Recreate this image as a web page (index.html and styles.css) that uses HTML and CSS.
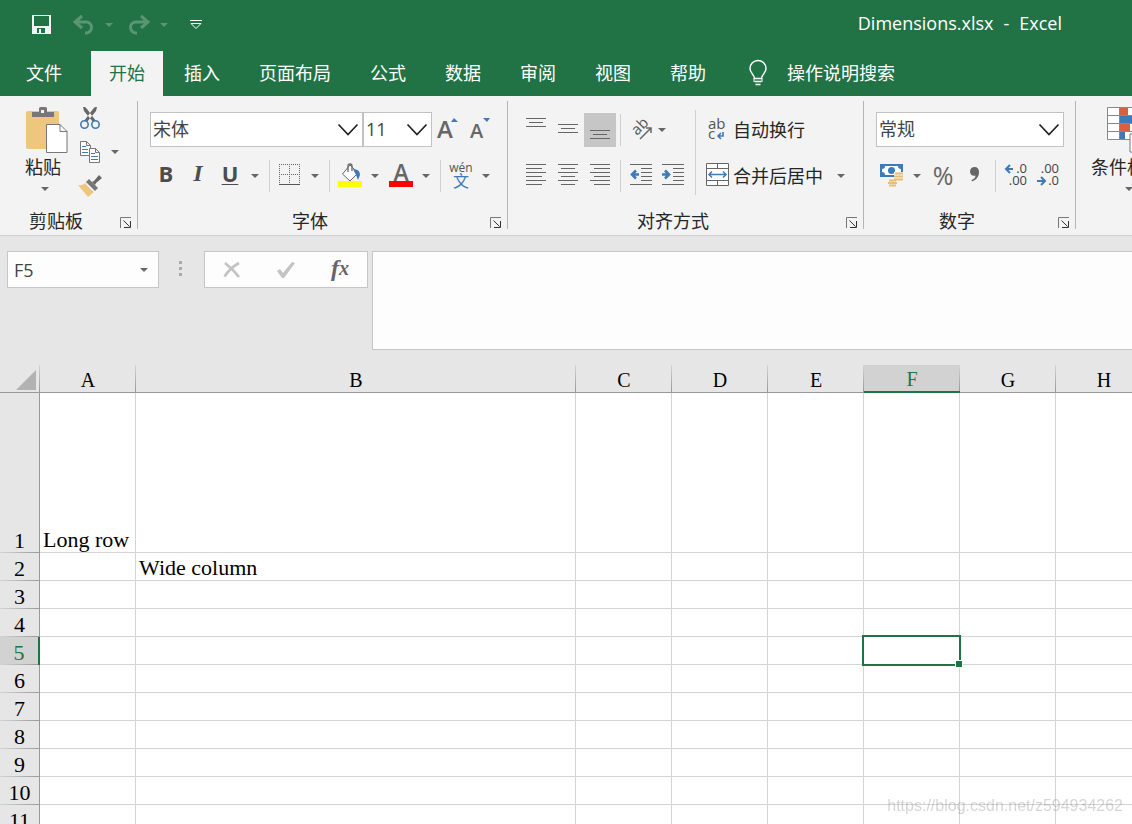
FILE: index.html
```html
<!DOCTYPE html>
<html lang="zh-CN">
<head>
<meta charset="utf-8">
<title>Dimensions.xlsx - Excel</title>
<link rel="stylesheet" href="styles.css">
</head>
<body>
<svg class="defs" aria-hidden="true">
  <symbol id="caret" viewBox="0 0 14 8"><path d="M3 2h8l-4 4z" fill="currentColor"/></symbol>
  <symbol id="chevron" viewBox="0 0 22 14"><path d="M1.500 1.500L11 11.500 20.500 1.500" fill="none" stroke="#222" stroke-width="1.700"/></symbol>
  <symbol id="launch" viewBox="0 0 11 11"><path d="M.5 11V.5H11" fill="none" stroke="#777"/><path d="M3.500 3.500l6 6M10.500 4v6.500H4" fill="none" stroke="#333"/></symbol>
</svg>
<div class="app">
  <header class="titlebar">
    <div class="quick">
      <button class="qbtn" aria-label="保存"><svg width="19" height="19" viewBox="0 0 19 19"><path d="M0 0h19v19H0z" fill="#f3f3f3"/><path d="M2 1h15v10H2z" fill="#217346"/><path d="M5 13h8v5H5z" fill="#217346"/><path d="M7 14h2v4H7z" fill="#f3f3f3"/></svg></button>
      <button class="qbtn undo" aria-label="撤消"><svg width="22" height="20" viewBox="0 0 22 20"><path d="M9 1L2 7l7 6M2 7h11a5.500 5.500 0 0 1 0 11h-1" fill="none" stroke="currentColor" stroke-width="3"/></svg></button>
      <button class="drop faded" aria-label="撤消列表"><svg width="14" height="8"><use href="#caret"/></svg></button>
      <button class="qbtn redo" aria-label="恢复"><svg width="22" height="20" viewBox="0 0 22 20"><path d="M13 1l7 6-7 6M20 7H8a5.500 5.500 0 0 0 0 11h1" fill="none" stroke="currentColor" stroke-width="3"/></svg></button>
      <button class="drop faded" aria-label="恢复列表"><svg width="14" height="8"><use href="#caret"/></svg></button>
      <button class="qbtn custom" aria-label="自定义快速访问工具栏"><svg width="12" height="10" viewBox="0 0 12 10"><path d="M0 .5h12M1 3.500l5 5 5-5z" fill="none" stroke="#fff"/></svg></button>
    </div>
    <h1 class="doc-title"><span>Dimensions.xlsx</span><span>-</span><span>Excel</span></h1>
  </header>

  <nav class="tabs">
    <button class="tab file">文件</button>
    <button class="tab active">开始</button>
    <button class="tab">插入</button>
    <button class="tab">页面布局</button>
    <button class="tab">公式</button>
    <button class="tab">数据</button>
    <button class="tab">审阅</button>
    <button class="tab">视图</button>
    <button class="tab">帮助</button>
    <button class="tab tell"><svg width="18" height="26" viewBox="0 0 18 26"><path d="M5.500 18.500c0-4-4.500-5-4.500-10a8 8 0 0 1 16 0c0 5-4.500 6-4.500 10zM5.500 21.500h7M6.500 24.500h5" fill="none" stroke="#fff" stroke-width="1.500"/><path d="M5 18v4M13 18v4" stroke="#fff"/></svg>操作说明搜索</button>
  </nav>

  <section class="ribbon">
    <div class="group">
      <div class="body clip">
        <button class="big">
          <svg width="42" height="46" viewBox="0 0 42 46"><rect y="4" width="33" height="38" rx="2" fill="#eec67e"/><path d="M6 5h7V1.500Q13 0 14.500 0h5Q21 0 21 1.500V5h7v5H6z" fill="#777"/><path d="M15 3h3v3h-3z" fill="#f3f3f3"/><path d="M20.500 17.500H34l7 7v21H20.500z" fill="#fff" stroke="#777"/><path d="M34 17.500v7h7" fill="none" stroke="#777"/></svg>
          <span>粘贴</span>
          <svg width="14" height="8"><use href="#caret"/></svg>
        </button>
        <div class="stack">
          <button class="ico" aria-label="剪切"><svg width="20" height="24" viewBox="0 0 20 24"><path d="M3 1h2l2 2 9 12-3 1L4 5zM17 1h-2l-2 2-9 12 3 1 9-11z" fill="#666"/><circle cx="4.500" cy="18.500" r="3.700" fill="#f3f3f3" stroke="#3f7ab8" stroke-width="1.600"/><circle cx="15.500" cy="18.500" r="3.700" fill="#f3f3f3" stroke="#3f7ab8" stroke-width="1.600"/></svg></button>
          <div class="row-tight"><button class="ico" aria-label="复制"><svg width="22" height="24" viewBox="0 0 22 24"><path d="M1.500 1.500h6l4 4v10h-10zM7.500 1.500v4h4" fill="#fff" stroke="#777"/><path d="M3 6.500h4M3 9.500h6M3 12.500h6" stroke="#3f7ab8"/><path d="M10.500 8.500h6l4 4v10h-10zM16.500 8.500v4h4" fill="#fff" stroke="#777"/><path d="M12 13.500h4M12 16.500h7M12 19.500h7" stroke="#3f7ab8"/></svg></button><button class="drop" aria-label="复制选项"><svg width="14" height="8"><use href="#caret"/></svg></button></div>
          <button class="ico" aria-label="格式刷"><svg width="24" height="22" viewBox="0 0 24 22"><path d="M0 10q5 1 7-2l9 9-6 5z" fill="#eec67e"/><path d="M8 7l3-3 9 9-3 3z" fill="#777"/><path d="M9 10l6 6" stroke="#f3f3f3"/><path d="M14 7l2-1 5-6 3 3-6 5-1 2z" fill="#666"/></svg></button>
        </div>
      </div>
      <div class="foot"><span>剪贴板</span><button class="launch" aria-label="剪贴板设置"><svg width="11" height="11"><use href="#launch"/></svg></button></div>
    </div>

    <div class="group">
      <div class="body rows">
        <div class="row upper">
          <label class="combo font-name"><select aria-label="字体"><option>宋体</option></select><svg width="22" height="14"><use href="#chevron"/></svg></label>
          <label class="combo font-size"><select aria-label="字号"><option>11</option></select><svg width="22" height="14"><use href="#chevron"/></svg></label>
          <button class="ico" aria-label="增大字号"><svg width="22" height="28" viewBox="0 0 22 28"><text x="0" y="22" class="glyph" font-size="24">A</text><path d="M14 6l3-4 4 4z" fill="#3f7ab8"/></svg></button>
          <button class="ico" aria-label="减小字号"><svg width="22" height="28" viewBox="0 0 22 28"><text x="1" y="22" class="glyph" font-size="20">A</text><path d="M14 2h7l-3 4z" fill="#3f7ab8"/></svg></button>
        </div>
        <div class="row">
          <button class="ico fmt bold">B</button>
          <button class="ico fmt ital">I</button>
          <button class="ico fmt under">U</button>
          <button class="drop" aria-label="下划线选项"><svg width="14" height="8"><use href="#caret"/></svg></button>
          <i class="sep"></i>
          <button class="ico" aria-label="边框"><svg width="22" height="22" viewBox="0 0 22 22"><path d="M.5 0v20M10.500 0v20M20.500 0v20M0 .5h21M0 10.500h21" stroke="#666" stroke-dasharray="1 1"/><path d="M0 20.500h21" stroke="#555"/></svg></button>
          <button class="drop" aria-label="边框选项"><svg width="14" height="8"><use href="#caret"/></svg></button>
          <i class="sep"></i>
          <button class="ico" aria-label="填充颜色"><svg width="24" height="24" viewBox="0 0 24 24"><path d="M12 2l8 8-8 8-7.500-7z" fill="#fff" stroke="#666"/><path d="M10 9V3q0-2 2-2t2 2v5" fill="none" stroke="#666" stroke-width="1.300"/><path d="M15 6q7 0 7 6l-2 5-2-5z" fill="#3f7ab8"/><path d="M0 18h24v6H0z" fill="#ff0"/></svg></button>
          <button class="drop" aria-label="填充颜色选项"><svg width="14" height="8"><use href="#caret"/></svg></button>
          <button class="ico" aria-label="字体颜色"><svg width="24" height="24" viewBox="0 0 24 24"><text x="12" y="18" class="glyph" text-anchor="middle" font-size="23">A</text><path d="M0 18h24v6H0z" fill="#f00"/></svg></button>
          <button class="drop" aria-label="字体颜色选项"><svg width="14" height="8"><use href="#caret"/></svg></button>
          <i class="sep"></i>
          <button class="ico phon"><span>wén</span><span class="blue">文</span></button>
          <button class="drop" aria-label="拼音选项"><svg width="14" height="8"><use href="#caret"/></svg></button>
        </div>
      </div>
      <div class="foot"><span>字体</span><button class="launch" aria-label="字体设置"><svg width="11" height="11"><use href="#launch"/></svg></button></div>
    </div>

    <div class="group">
      <div class="body split">
        <div class="rows align">
          <div class="row upper">
            <button class="ico" aria-label="顶端对齐"><svg width="20" height="24" viewBox="0 0 20 24"><path d="M0 .5h20M3 4.500h14M0 8.500h20" stroke="#666"/></svg></button>
            <button class="ico" aria-label="垂直居中"><svg width="20" height="24" viewBox="0 0 20 24"><path d="M0 6.500h20M3 10.500h14M0 14.500h20" stroke="#666"/></svg></button>
            <button class="ico on" aria-label="底端对齐"><svg width="20" height="24" viewBox="0 0 20 24"><path d="M0 12.500h20M3 16.500h14M0 20.500h20" stroke="#666"/></svg></button>
            <i class="sep"></i>
            <button class="ico slim" aria-label="方向"><svg width="28" height="24" viewBox="0 0 28 24"><text x="0" y="0" transform="translate(12 18) rotate(-45)" class="ab" font-size="15">ab</text><path d="M15 21L26 10M21 10h5v5" fill="none" stroke="#666" stroke-width="1.500"/></svg></button>
            <button class="drop" aria-label="方向选项"><svg width="14" height="8"><use href="#caret"/></svg></button>
          </div>
          <div class="row">
            <button class="ico" aria-label="左对齐"><svg width="20" height="22" viewBox="0 0 20 22"><path d="M0 .5h20M0 4.500h16M0 8.500h20M0 12.500h16M0 16.500h20M0 20.500h16" stroke="#666"/></svg></button>
            <button class="ico" aria-label="居中"><svg width="20" height="22" viewBox="0 0 20 22"><path d="M0 .5h20M3 4.500h14M0 8.500h20M3 12.500h14M0 16.500h20M3 20.500h14" stroke="#666"/></svg></button>
            <button class="ico" aria-label="右对齐"><svg width="20" height="22" viewBox="0 0 20 22"><path d="M0 .5h20M4 4.500h16M0 8.500h20M4 12.500h16M0 16.500h20M4 20.500h16" stroke="#666"/></svg></button>
            <i class="sep"></i>
            <button class="ico" aria-label="减少缩进量"><svg width="22" height="22" viewBox="0 0 22 22"><path d="M0 .5h22M11 4.500h11M11 8.500h11M11 12.500h11M11 16.500h11M0 20.500h22" stroke="#666"/><path d="M9 10.500H2M6 6.500l-4 4 4 4" fill="none" stroke="#3f7ab8" stroke-width="2.600"/></svg></button>
            <button class="ico" aria-label="增加缩进量"><svg width="22" height="22" viewBox="0 0 22 22"><path d="M0 .5h22M11 4.500h11M11 8.500h11M11 12.500h11M11 16.500h11M0 20.500h22" stroke="#666"/><path d="M0 10.500h7M3 6.500l4 4-4 4" fill="none" stroke="#3f7ab8" stroke-width="2.600"/></svg></button>
          </div>
        </div>
        <i class="divider"></i>
        <div class="rows wrap">
          <div class="row upper"><button class="wide"><span class="ico"><svg width="20" height="24" viewBox="0 0 20 24"><text x="1" y="11" class="ab" font-size="15">ab</text><text x="1" y="21" class="ab" font-size="15">c</text><path d="M16 14v4h-5M14 15l-3 3 3 3" fill="none" stroke="#3f7ab8" stroke-width="1.600"/></svg></span>自动换行</button></div>
          <div class="row"><button class="wide"><span class="ico"><svg width="24" height="24" viewBox="0 0 24 24"><path d="M1.500.5h22v22h-22zM1 5.500h23M1 17.500h23M12.500 0v5M12.500 18v5" fill="#fff" stroke="#666"/><path d="M4 11.500h17M7 8.500l-3 3 3 3M18 8.500l3 3-3 3" fill="none" stroke="#3f7ab8" stroke-width="1.500"/></svg></span>合并后居中</button><button class="drop far" aria-label="合并选项"><svg width="14" height="8"><use href="#caret"/></svg></button></div>
        </div>
      </div>
      <div class="foot"><span>对齐方式</span><button class="launch" aria-label="对齐设置"><svg width="11" height="11"><use href="#launch"/></svg></button></div>
    </div>

    <div class="group">
      <div class="body rows">
        <div class="row upper">
          <label class="combo num"><select aria-label="数字格式"><option>常规</option></select><svg width="22" height="14"><use href="#chevron"/></svg></label>
        </div>
        <div class="row">
          <button class="ico" aria-label="会计数字格式"><svg width="24" height="24" viewBox="0 0 24 24"><path d="M0 1h23v13H0z" fill="#3f7ab8"/><path d="M5 3h13q0 3 3 3v3q-3 0-3 3H5q0-3-3-3V6q3 0 3-3z" fill="#fff"/><circle cx="11.500" cy="7.500" r="3.500" fill="#3f7ab8"/><path d="M14 9h10v10H14z" fill="#f3f3f3"/><path d="M7 15h11v9H7z" fill="#f3f3f3"/><path d="M15 10.500h8M14 13.500h9M14 16.500h9M9 17.500h7M8 20h9M9 22.500h7" stroke="#e8bd77" stroke-width="2"/></svg></button>
          <button class="drop" aria-label="会计格式选项"><svg width="14" height="8"><use href="#caret"/></svg></button>
          <button class="ico pct">%</button>
          <button class="ico" aria-label="千位分隔样式"><svg width="10" height="16" viewBox="0 0 10 16"><path d="M4.500 0C7.500 0 9 2 9 5c0 5-3 8-7 9.500L1.500 13C4 12 5.500 10.500 5.500 8.500 3 9.500 0 8 0 4.500 0 2 2 0 4.500 0z" fill="#666"/></svg></button>
          <i class="sep"></i>
          <button class="ico" aria-label="增加小数位数"><svg width="24" height="24" viewBox="0 0 24 24"><text x="23" y="10" class="dec">.0</text><text x="23" y="22" class="dec">.00</text><path d="M9 6H2M6 2L2 6l4 4" fill="none" stroke="#3f7ab8" stroke-width="2"/></svg></button>
          <button class="ico" aria-label="减少小数位数"><svg width="24" height="24" viewBox="0 0 24 24"><text x="23" y="10" class="dec">.00</text><text x="23" y="22" class="dec">.0</text><path d="M1 18h7M5 14l4 4-4 4" fill="none" stroke="#3f7ab8" stroke-width="2"/></svg></button>
        </div>
      </div>
      <div class="foot"><span>数字</span><button class="launch" aria-label="数字设置"><svg width="11" height="11"><use href="#launch"/></svg></button></div>
    </div>

    <div class="group last">
      <div class="body clip">
        <button class="big cond">
          <svg width="42" height="46" viewBox="0 0 42 46"><path d="M.5.500h34v32H.5zM0 8.500h35M0 16.500h35M0 24.500h35M12.500 0v33" fill="#fff" stroke="#888"/><path d="M13 1h8v7h-8zM13 17h10v7H13z" fill="#d85f42"/><path d="M13 9h12v7H13zM13 25h5v7h-5z" fill="#3f7ab8"/><path d="M23 27h18v18H23z" fill="#fff" stroke="#777"/></svg>
          <span>条件格式</span>
          <svg width="14" height="8"><use href="#caret"/></svg>
        </button>
      </div>
    </div>
  </section>

  <section class="formula">
    <div class="namebox"><input type="text" value="F5" aria-label="名称框"><button class="drop" aria-label="名称列表"><svg width="14" height="8"><use href="#caret"/></svg></button></div>
    <svg class="dots" width="3" height="15" viewBox="0 0 3 15"><path d="M0 0h3v3H0zM0 6h3v3H0zM0 12h3v3H0z" fill="#aaa"/></svg>
    <div class="fx">
      <button aria-label="取消"><svg width="18" height="18" viewBox="0 0 18 18"><path d="M2 2q8 6 14 14M16 2Q7 7 1.500 15.500" fill="none" stroke="#c3c3c3" stroke-width="2.600"/></svg></button>
      <button aria-label="输入"><svg width="20" height="18" viewBox="0 0 20 18"><path d="M1 10l3-2 3 4L16 1l3 1L8 17H6z" fill="#c3c3c3"/></svg></button>
      <button class="fxi">f<span>x</span></button>
    </div>
    <textarea class="entry" aria-label="编辑栏"></textarea>
  </section>

  <main class="sheet">
    <table>
      <colgroup><col class="c-head"><col class="c-std"><col class="c-wide"><col class="c-std"><col class="c-std"><col class="c-std"><col class="c-std"><col class="c-std"><col class="c-std"></colgroup>
      <thead><tr><th class="corner"><svg width="20" height="20" viewBox="0 0 20 20"><path d="M20 0v20H0z" fill="#b2b2b2"/></svg></th><th>A</th><th>B</th><th>C</th><th>D</th><th>E</th><th class="cur">F</th><th>G</th><th>H</th></tr></thead>
      <tbody>
        <tr class="tall"><th>1</th><td>Long row</td><td></td><td></td><td></td><td></td><td></td><td></td><td></td></tr>
        <tr><th>2</th><td></td><td>Wide column</td><td></td><td></td><td></td><td></td><td></td><td></td></tr>
        <tr><th>3</th><td></td><td></td><td></td><td></td><td></td><td></td><td></td><td></td></tr>
        <tr><th>4</th><td></td><td></td><td></td><td></td><td></td><td></td><td></td><td></td></tr>
        <tr><th class="cur">5</th><td></td><td></td><td></td><td></td><td></td><td class="selected"><i class="frame"></i><i class="handle"></i></td><td></td><td></td></tr>
        <tr><th>6</th><td></td><td></td><td></td><td></td><td></td><td></td><td></td><td></td></tr>
        <tr><th>7</th><td></td><td></td><td></td><td></td><td></td><td></td><td></td><td></td></tr>
        <tr><th>8</th><td></td><td></td><td></td><td></td><td></td><td></td><td></td><td></td></tr>
        <tr><th>9</th><td></td><td></td><td></td><td></td><td></td><td></td><td></td><td></td></tr>
        <tr><th>10</th><td></td><td></td><td></td><td></td><td></td><td></td><td></td><td></td></tr>
        <tr><th>11</th><td></td><td></td><td></td><td></td><td></td><td></td><td></td><td></td></tr>
      </tbody>
    </table>
  </main>
  <div class="watermark">https://blog.csdn.net/z594934262</div>
</div>
</body>
</html>
```

FILE: styles.css
```css
* { box-sizing: border-box; }
body {
  margin: 0;
  font: 18px/24px "Open Sans", "Noto Sans CJK SC", sans-serif;
  color: #262626;
  background: #e6e6e6;
}
button, select, input, textarea {
  font: inherit;
  color: inherit;
  border: 0;
  padding: 0;
  margin: 0;
  background: none;
  border-radius: 0;
}
svg { display: block; flex: none; overflow: visible; }
.defs { position: absolute; width: 0; height: 0; }
.app { display: flex; flex-direction: column; height: 100vh; overflow: hidden; }

/* Title bar */
.titlebar {
  flex: none;
  display: flex;
  align-items: center;
  justify-content: space-between;
  height: 51px;
  padding: 0 70px 2px 32px;
  background: #217346;
  color: #fff;
}
.quick { display: flex; align-items: center; }
.qbtn { display: flex; }
.undo { margin-left: 22px; }
.redo { margin-left: 9px; }
.custom { margin-left: 16px; }
.undo, .redo { color: #5a9674; }
.doc-title { display: flex; gap: 10px; margin: 0; padding-bottom: 3px; font-size: 18px; font-weight: 400; }

/* Tabs */
.tabs {
  flex: none;
  display: flex;
  gap: 3px;
  height: 45px;
  padding-left: 8px;
  background: #217346;
  white-space: nowrap;
}
.tab { padding: 0 18px 2px; color: #fff; }
.file { margin-right: 8px; }
.active { background: #f3f3f3; color: #217346; }
.tell { display: flex; align-items: center; gap: 20px; padding-left: 22px; }

/* Ribbon */
.ribbon {
  flex: none;
  display: flex;
  padding: 5px 0 6px;
  background: #f3f3f3;
  border-bottom: 1px solid #cfcfcf;
  overflow: hidden;
  white-space: nowrap;
}
.group { flex: none; display: flex; flex-direction: column; border-right: 1px solid #b5b5b5; }
.last { border-right: 0; }
.body { height: 112px; }
.clip { display: flex; padding-left: 10px; }
.split { display: flex; }
.rows { display: grid; grid-template-rows: 35px 32px; row-gap: 13px; align-content: start; padding: 11px 11px 0 12px; }
.row, .row-tight { display: flex; align-items: center; }
.foot { display: flex; align-items: flex-end; height: 16px; line-height: 16px; }
.foot span { flex: 1; text-align: center; }
.launch { margin: 0 6px 1px 8px; }

.big { display: flex; flex-direction: column; align-items: center; width: 66px; padding-top: 6px; color: #262626; }
.big span { margin-top: 2px; }
.big > svg:first-child { margin-left: 8px; }
.big > svg:last-child { margin: 6px 0 0 4px; color: #666; }
.cond { width: 82px; }
.cond > svg:first-child { margin-left: 2px; }
.stack { display: grid; grid-template-rows: 34px 34px 34px; padding-right: 12px; }

.ico { display: flex; align-items: center; justify-content: center; width: 32px; height: 32px; color: #555; }
.row .ico { flex: none; padding-bottom: 2px; }
.upper .ico { height: 35px; padding: 1px 0 0; }
.upper .on { align-self: flex-end; height: 34px; padding: 0; background: #c6c6c6; }
.stack .ico { width: 28px; height: 34px; }
.row .slim { width: 28px; }
.drop { display: flex; justify-content: center; width: 14px; margin: 0 3px 0 2px; color: #666; }
.stack .drop { margin-left: 4px; }
.quick .drop { margin-left: 7px; color: #5a9674; }
.far { margin-left: 11px; }
.sep { width: 1px; height: 32px; margin: 0 4px; background: #d0d0d0; }
.divider { width: 1px; height: 85px; margin-top: 9px; background: #d0d0d0; }

.combo { display: grid; align-items: center; height: 35px; background: #fff; border: 1px solid #c2c2c2; }
.combo select, .combo svg { grid-area: 1 / 1; }
.combo select { appearance: none; width: 100%; height: 100%; padding: 0 0 2px 2px; color: #444; }
.combo svg { justify-self: end; margin-right: 3px; pointer-events: none; }
.font-name { width: 213px; }
.font-size { width: 69px; }
.num { width: 188px; }

.fmt { font-size: 22px; font-weight: 700; color: #4d4d4d; }
.row .fmt { padding-bottom: 6px; }
.ital { font-family: "Liberation Serif", serif; font-style: italic; font-size: 24px; }
.under { text-decoration: underline; text-decoration-thickness: 1px; text-underline-offset: 2px; }
.glyph { font-family: "Open Sans", sans-serif; font-weight: 600; fill: #666; }
.ab { font-family: "Open Sans", sans-serif; fill: #555; }
.dec { font-family: "Open Sans", sans-serif; font-size: 13px; fill: #444; text-anchor: end; }
.phon { flex-direction: column; font-size: 12px; line-height: 12px; }
.phon .blue { font-size: 16px; line-height: 14px; color: #3f7ab8; }
.pct { font-size: 25px; color: #666; }
.align { padding-right: 6px; }
.wrap { padding: 11px 12px 0 5px; }
.wide { display: flex; align-items: center; }

/* Formula bar */
.formula { flex: none; display: flex; align-items: flex-start; padding: 15px 0 15px 7px; background: #e6e6e6; }
.namebox, .fx { display: flex; align-items: center; height: 37px; background: #fdfdfd; border: 1px solid #c6c6c6; }
.namebox { width: 152px; }
.namebox input { flex: 1; min-width: 0; padding-left: 6px; color: #444; }
.namebox .drop { margin-right: 7px; }
.dots { margin: 10px 22px 0 20px; }
.fx { width: 164px; }
.fx button { flex: 1; display: flex; justify-content: center; align-items: center; }
.fx .fxi { padding-bottom: 4px; font: italic 700 24px/24px "Liberation Serif", serif; color: #666; }
.fxi span { font-size: 20px; }
.entry { flex: 1; height: 99px; margin-left: 4px; background: #fdfdfd; border: 1px solid #c6c6c6; border-right: 0; resize: none; }

/* Worksheet */
.sheet { flex: 1; min-height: 0; overflow: hidden; background: #fff; }
table { table-layout: fixed; width: 1152px; border-spacing: 0; font: 22px/24px "Liberation Serif", "Noto Sans CJK SC", serif; color: #000; }
.c-head { width: 40px; }
.c-std { width: 96px; }
.c-wide { width: 440px; }
tr { height: 28px; }
.tall { height: 160px; }
th { padding: 0; font-weight: 400; background: #e6e6e6; }
thead th {
  padding-top: 2px;
  font-size: 20px;
  border-bottom: 1px solid #999;
  background: linear-gradient(#d4d4d4, #999) right / 1px 100% no-repeat #e6e6e6;
}
thead .cur { color: #217346; background-color: #d2d2d2; border-bottom: 2px solid #217346; }
.corner svg { margin-left: 16px; }
tbody th {
  vertical-align: bottom;
  border-right: 1px solid #999;
  background: linear-gradient(90deg, #d4d4d4, #999) bottom / 100% 1px no-repeat #e6e6e6;
}
tbody .cur { color: #217346; background-color: #d2d2d2; border-right: 2px solid #217346; }
td { height: 28px; padding: 0 0 0 3px; vertical-align: bottom; white-space: nowrap; border-right: 1px solid #d4d4d4; border-bottom: 1px solid #d4d4d4; }
.selected { position: relative; }
.frame { position: absolute; inset: -2px; border: 2px solid #217346; }
.handle { position: absolute; right: -4px; bottom: -4px; width: 8px; height: 8px; background: #217346; border: 1px solid #fff; }
.watermark { position: fixed; right: 9px; bottom: 6px; font: 16px/24px "Liberation Sans", sans-serif; color: rgba(120, 120, 120, 0.3); }
```
